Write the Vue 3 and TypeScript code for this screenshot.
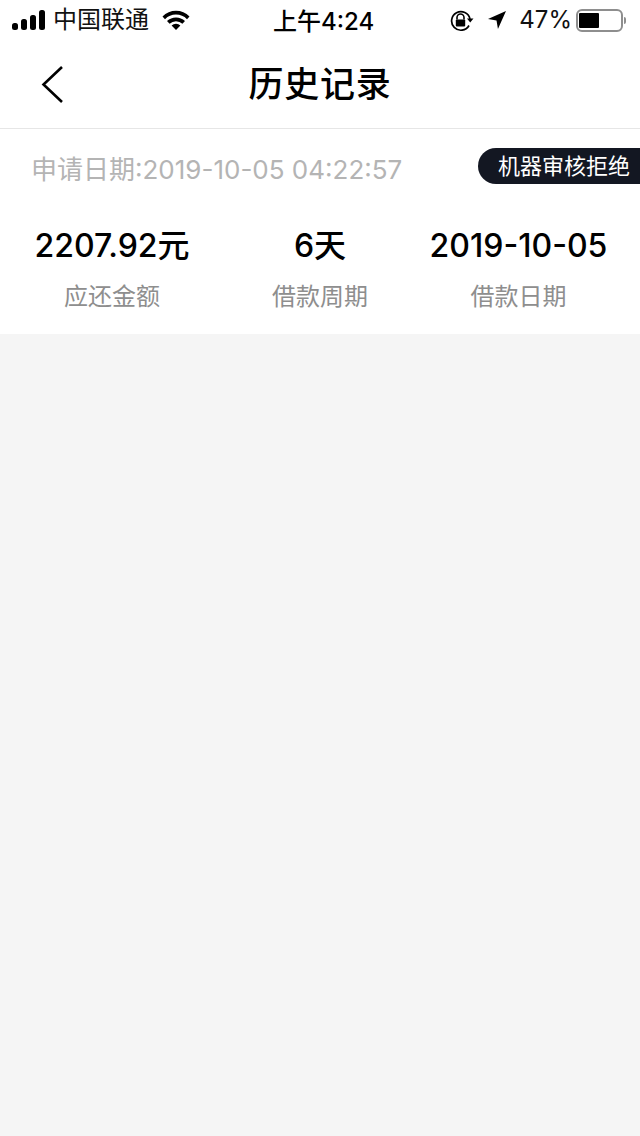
<script setup lang="ts">
const stats = [
  { value: '2207.92元', label: '应还金额' },
  { value: '6天', label: '借款周期' },
  { value: '2019-10-05', label: '借款日期' },
]
</script>

<template>
  <div class="page">
    <div class="status">
      <div class="left">
        <svg class="signal" width="34" height="20" viewBox="0 0 34 20">
          <rect x="0" y="13" width="6" height="7" rx="2.5" />
          <rect x="9" y="9" width="6" height="11" rx="2.5" />
          <rect x="18" y="5" width="6" height="15" rx="2.5" />
          <rect x="27" y="0" width="6" height="20" rx="2.5" />
        </svg>
        <span class="carrier">中国联通</span>
        <svg class="wifi" width="28" height="20" viewBox="0 0 28 20">
          <path d="M0.5 6.5 A19 19 0 0 1 27.5 6.5 L25 9.2 A15.5 15.5 0 0 0 3 9.2 Z" />
          <path d="M5 11 A13 13 0 0 1 23 11 L20.4 13.7 A9.3 9.3 0 0 0 7.6 13.7 Z" />
          <path d="M9.6 15.4 A6.5 6.5 0 0 1 18.4 15.4 L14 20 Z" />
        </svg>
      </div>
      <span class="time">上午4:24</span>
      <div class="right">
        <svg class="lock" width="24" height="22" viewBox="0 0 24 22">
          <path d="M19 15.5 A9.3 9.3 0 1 1 20 9" fill="none" stroke="#000" stroke-width="1.7" />
          <path d="M17 8.5 L23.5 8.5 L20.2 12.5 Z" />
          <path d="M7 9.5 V7.5 A3.5 3.5 0 0 1 14 7.5 V9.5" fill="none" stroke="#000" stroke-width="1.6" />
          <rect x="5.8" y="9.5" width="9.4" height="7" rx="1" />
        </svg>
        <svg class="arrow" width="18" height="18" viewBox="0 0 19 19">
          <path d="M19 0 L0 8.5 L9 10 L10.5 19 Z" />
        </svg>
        <span class="percent">47%</span>
        <div class="battery">
          <div class="shell"><div class="fill"></div></div>
          <div class="nub"></div>
        </div>
      </div>
    </div>

    <header class="nav">
      <svg class="back" width="24" height="40" viewBox="0 0 24 40">
        <path d="M22 2 L3.5 19.5 L22 37" fill="none" stroke="#000" stroke-width="2.6" />
      </svg>
      <h1 class="title">历史记录</h1>
    </header>

    <section class="card">
      <div class="apply">
        <span class="date">申请日期:2019-10-05 04:22:57</span>
        <span class="badge">机器审核拒绝</span>
      </div>
      <div class="stats">
        <div v-for="s in stats" :key="s.label" class="stat">
          <div class="value">{{ s.value }}</div>
          <div class="label">{{ s.label }}</div>
        </div>
      </div>
    </section>
  </div>
</template>

<style>
html, body { margin: 0; background: #f5f5f5; }
</style>

<style scoped>
.page {
  width: 640px;
  height: 1136px;
  overflow: hidden;
  background: #f5f5f5;
  font-family: Inter, "Noto Sans CJK SC", sans-serif;
  color: #000;
}
.status {
  height: 40px;
  background: #fff;
  display: flex;
  align-items: center;
  justify-content: space-between;
  position: relative;
  padding: 0 14px 0 12px;
  box-sizing: border-box;
}
.left, .right { display: flex; align-items: center; }
.signal { fill: #000; margin-right: 7px; }
.carrier { font-size: 24px; line-height: 44px; color: #111; }
.wifi { fill: #000; margin-left: 13px; }
.time {
  position: absolute;
  left: 273px;
  top: 0;
  font-size: 24px;
  line-height: 44px;
  font-weight: 500;
  white-space: nowrap;
}
.lock { margin-right: 14px; margin-top: 1px; }
.arrow { margin-right: 13px; }
.percent { font-size: 24px; line-height: 44px; color: #111; margin-right: 4px; }
.battery { display: flex; align-items: center; }
.shell {
  width: 47px;
  height: 23px;
  box-sizing: border-box;
  border: 2px solid #8e8e8e;
  border-radius: 6px;
  padding: 2px 1px;
}
.fill { width: 20px; height: 15px; background: #000; border-radius: 1px; }
.nub { width: 2px; height: 7px; background: #8e8e8e; border-radius: 0 2px 2px 0; margin-left: 1px; }
.nav {
  height: 88px;
  background: #fff;
  border-bottom: 1px solid #e6e6e6;
  display: flex;
  align-items: center;
  justify-content: center;
  position: relative;
}
.back { position: absolute; left: 40px; top: 25px; }
.title { margin: 0; font-size: 35px; font-weight: 500; line-height: 88px; letter-spacing: 0.8px; }
.card { background: #fff; height: 205px; }
.apply {
  height: 78px;
  display: flex;
  align-items: flex-start;
  justify-content: space-between;
  padding-left: 31px;
}
.date { font-size: 26px; line-height: 82px; color: #b4b4b4; white-space: nowrap; }
.badge {
  margin-top: 19px;
  height: 36px;
  line-height: 37px;
  width: 162px;
  box-sizing: border-box;
  padding-left: 20px;
  background: #131722;
  color: #fff;
  font-size: 22px;
  white-space: nowrap;
  border-radius: 18px 0 0 18px;
}
.stats {
  display: grid;
  grid-template-columns: 224px 192px 205px;
  padding-top: 17px;
}
.stat { text-align: center; }
.value { font-size: 32px; line-height: 44px; font-weight: 500; white-space: nowrap; }
.label { font-size: 24px; line-height: 36px; color: #8e8e8e; margin-top: 11px; }
</style>
